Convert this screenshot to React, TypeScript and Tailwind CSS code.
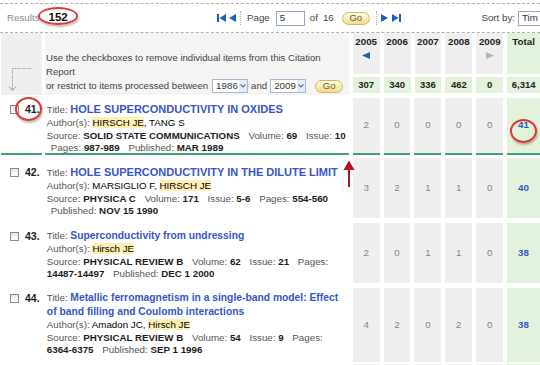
import React from 'react';

const FONT = "font-['Liberation_Sans',Arial,sans-serif]";

const years = ['2005', '2006', '2007', '2008', '2009'];
const yearTotals = ['307', '340', '336', '462', '0'];

function GoButton() {
  return (
    <span className="inline-flex h-[13px] w-[28px] items-center justify-center rounded-full border border-[#cdb76a] bg-gradient-to-b from-[#fffbe0] to-[#f1dc86] text-[9.5px] leading-none text-[#5a5a5a]">
      Go
    </span>
  );
}

function MiniSelect({ value }: { value: string }) {
  return (
    <span className="inline-flex h-[14px] w-[36px] items-center justify-between border border-[#a5b9d1] bg-white pl-[3px] text-[9.75px] leading-none text-[#333]">
      {value}
      <span className="flex h-full w-[8px] items-center justify-center bg-[#e3ecf8]">
        <svg width="6" height="4" viewBox="0 0 6 4">
          <path d="M0.5 0.5 L3 3 L5.5 0.5" fill="none" stroke="#4a74b8" strokeWidth="1.2" />
        </svg>
      </span>
    </span>
  );
}

function Hl({ children }: { children: React.ReactNode }) {
  return <span className="bg-[#fff0b3]">{children}</span>;
}

function Lbl({ children, first }: { children: React.ReactNode; first?: boolean }) {
  return <span className={first ? 'text-[#555]' : 'ml-[6px] text-[#555]'}>{children}</span>;
}

function Val({ children }: { children: React.ReactNode }) {
  return <b className="text-[#1c1c1c]">{children}</b>;
}

type RowProps = {
  n: string;
  mt: string;
  h: string;
  pt: string;
  counts: string[];
  total: string;
  selected?: boolean;
  children: React.ReactNode;
};

function Row({ n, mt, h, pt, counts, total, selected, children }: RowProps) {
  const line = selected ? 'border-b-2 border-[#3ba56b]' : '';
  return (
    <div className={`flex ${mt}`}>
      <div className={`ml-[1px] w-[41px] ${h} ${pt} ${line}`}>
        {n && (
          <div className="flex h-[14px] items-center">
            <span className="ml-[9px] h-[9px] w-[9px] border border-[#8c8c8c] bg-gradient-to-b from-[#e8e8e8] to-white" />
            <span className="ml-[6px] pt-[2px] text-[10.5px] font-bold text-[#1c1c1c]">{n}</span>
          </div>
        )}
      </div>
      <div className={`ml-[3px] w-[305px] whitespace-nowrap pl-[2px] ${h} ${pt} ${line} text-[9.75px] leading-[12.5px]`}>
        {children}
      </div>
      {counts.map((c, i) => (
        <div
          key={i}
          className={`ml-[4px] flex w-[27px] ${h} items-center justify-center bg-[#efefef] text-[9.75px] text-[#858585] ${line}`}
        >
          {c}
        </div>
      ))}
      <div className={`ml-[4px] flex w-[33px] ${h} items-center justify-center bg-[#e3f2dc] text-[9.75px] font-bold text-[#3556c8] ${line}`}>
        {total}
      </div>
    </div>
  );
}

function Title({ children, caps }: { children: React.ReactNode; caps?: boolean }) {
  return (
    <div className="leading-[14px]">
      <span className="text-[#555]">Title: </span>
      <span className={caps ? 'text-[11px] font-bold text-[#3556c8]' : 'text-[10.3px] font-bold text-[#3556c8]'}>
        {children}
      </span>
    </div>
  );
}

export default function App() {
  return (
    <div className={`relative h-[365px] w-[540px] overflow-hidden bg-white ${FONT}`}>
      {/* top bar */}
      <div className="pt-[3px]">
        <div className="flex h-[30px] items-center border-y border-dashed border-[#b0b0b0]">
          <div className="flex w-[217px] items-center pl-[7px]">
            <span className="text-[9.75px] text-[#888]">Results</span>
            <span className="ml-[9px] text-[11.5px] font-bold text-[#111]">152</span>
          </div>
          <div className="flex items-center text-[9.75px] text-[#444]">
            <svg width="20" height="10" viewBox="0 0 20 10">
              <rect x="0" y="1" width="2" height="8" fill="#1d5fb6" />
              <path d="M9 1 L2.5 5 L9 9 Z" fill="#1d5fb6" />
              <path d="M19 1 L12 5 L19 9 Z" fill="#1d5fb6" />
            </svg>
            <span className="ml-[3px] h-[14px] border-l border-dotted border-[#aaa]" />
            <span className="ml-[6px]">Page</span>
            <span className="ml-[6px] flex h-[15px] w-[29px] items-center border border-[#8fa8c8] bg-white pl-[3px] text-[#333]">5</span>
            <span className="ml-[5px]">of</span>
            <span className="ml-[5px]">16</span>
            <span className="ml-[8px] flex"><GoButton /></span>
            <span className="ml-[6px] h-[14px] border-l border-dotted border-[#aaa]" />
            <svg className="ml-[3px]" width="22" height="10" viewBox="0 0 22 10">
              <path d="M1 1 L8 5 L1 9 Z" fill="#1d5fb6" />
              <path d="M12 1 L18.5 5 L12 9 Z" fill="#1d5fb6" />
              <rect x="19" y="1" width="2" height="8" fill="#1d5fb6" />
            </svg>
          </div>
          <div className="ml-auto mr-[-12px] flex items-center text-[9.75px] text-[#444]">
            <span>Sort by:</span>
            <span className="ml-[3px] flex h-[15px] w-[34px] items-center border border-[#8fa8c8] bg-white pl-[3px] text-[#333]">Tim</span>
          </div>
        </div>
      </div>

      {/* header */}
      <div className="flex">
        <div className="ml-[1px] h-[62px] w-[41px] bg-[#efefef]">
          <svg width="41" height="62" viewBox="0 0 41 62">
            <path d="M30 35.5 H11.5 V57" fill="none" stroke="#9a9a9a" strokeWidth="1" strokeDasharray="1.5 1" />
            <path d="M8 53.5 L11.5 57.5 L15 53.5" fill="none" stroke="#9a9a9a" strokeWidth="1" />
          </svg>
        </div>
        <div className="ml-[3px] flex h-[62px] w-[305px] flex-col justify-end whitespace-nowrap bg-[#f4f4f4] pb-[2px] pl-[1px] text-[9.6px] leading-[14px] text-[#444]">
          <div>Use the checkboxes to remove individual items from this Citation</div>
          <div>Report</div>
          <div className="flex h-[14px] items-center">
            <span>or restrict to items processed between</span>
            <span className="ml-[4px] flex"><MiniSelect value="1986" /></span>
            <span className="ml-[3px]">and</span>
            <span className="ml-[3px] flex"><MiniSelect value="2009" /></span>
            <span className="ml-[9px] flex"><GoButton /></span>
          </div>
        </div>
        {years.map((y, i) => (
          <div key={y} className="ml-[4px] flex w-[27px] flex-col">
            <div className="flex h-[41px] flex-col items-center bg-[#efefef] pt-[3px]">
              <span className="text-[9.75px] font-bold leading-[12px] text-[#222]">{y}</span>
              {i === 0 && (
                <svg className="mt-[4px]" width="8" height="7" viewBox="0 0 8 7">
                  <path d="M8 0 L0 3.5 L8 7 Z" fill="#1d5fb6" />
                </svg>
              )}
              {i === 4 && (
                <svg className="mt-[4px]" width="8" height="7" viewBox="0 0 8 7">
                  <path d="M0 0 L8 3.5 L0 7 Z" fill="#b4b4b4" />
                </svg>
              )}
            </div>
            <div className="mt-[3px] flex h-[16px] items-center justify-center bg-[#e3f2dc] text-[9.5px] font-bold text-[#222]">
              {yearTotals[i]}
            </div>
          </div>
        ))}
        <div className="ml-[4px] flex w-[33px] flex-col">
          <div className="flex h-[41px] justify-center bg-[#e3f2dc] pt-[3px]">
            <span className="text-[9.75px] font-bold leading-[12px] text-[#222]">Total</span>
          </div>
          <div className="mt-[3px] flex h-[16px] items-center justify-center bg-[#e3f2dc] text-[9.5px] font-bold text-[#222]">
            6,314
          </div>
        </div>
      </div>

      <Row n="41." mt="mt-[3px]" h="h-[57px]" pt="pt-[4px]" counts={['2', '0', '0', '0', '0']} total="41" selected>
        <Title caps>HOLE SUPERCONDUCTIVITY IN OXIDES</Title>
        <div>
          <Lbl first>Author(s):</Lbl> <Hl>HIRSCH JE</Hl>, TANG S
        </div>
        <div>
          <Lbl first>Source:</Lbl> <Val>SOLID STATE COMMUNICATIONS</Val> <Lbl>Volume:</Lbl> <Val>69</Val>{' '}
          <Lbl>Issue:</Lbl> <Val>10</Val>
        </div>
        <div className="pl-[4px]">
          <Lbl first>Pages:</Lbl> <Val>987-989</Val> <Lbl>Published:</Lbl> <Val>MAR 1989</Val>
        </div>
      </Row>

      <Row n="42." mt="mt-[3px]" h="h-[60px]" pt="pt-[7px]" counts={['3', '2', '1', '1', '0']} total="40">
        <Title caps>HOLE SUPERCONDUCTIVITY IN THE DILUTE LIMIT</Title>
        <div>
          <Lbl first>Author(s):</Lbl> MARSIGLIO F, <Hl>HIRSCH JE</Hl>
        </div>
        <div>
          <Lbl first>Source:</Lbl> <Val>PHYSICA C</Val> <Lbl>Volume:</Lbl> <Val>171</Val> <Lbl>Issue:</Lbl>{' '}
          <Val>5-6</Val> <Lbl>Pages:</Lbl> <Val>554-560</Val>
        </div>
        <div className="pl-[4px]">
          <Lbl first>Published:</Lbl> <Val>NOV 15 1990</Val>
        </div>
      </Row>

      <Row n="43." mt="mt-[5px]" h="h-[60px]" pt="pt-[6px]" counts={['2', '0', '1', '1', '0']} total="38">
        <Title>Superconductivity from undressing</Title>
        <div>
          <Lbl first>Author(s):</Lbl> <Hl>Hirsch JE</Hl>
        </div>
        <div>
          <Lbl first>Source:</Lbl> <Val>PHYSICAL REVIEW B</Val> <Lbl>Volume:</Lbl> <Val>62</Val> <Lbl>Issue:</Lbl>{' '}
          <Val>21</Val> <Lbl>Pages:</Lbl>
        </div>
        <div>
          <Val>14487-14497</Val> <Lbl>Published:</Lbl> <Val>DEC 1 2000</Val>
        </div>
      </Row>

      <Row n="44." mt="mt-[5px]" h="h-[74px]" pt="pt-[3px]" counts={['4', '2', '0', '2', '0']} total="38">
        <div className="leading-[14px]">
          <span className="text-[#555]">Title: </span>
          <span className="text-[10.3px] font-bold text-[#3556c8]">
            Metallic ferromagnetism in a single-band model: Effect
            <br />
            of band filling and Coulomb interactions
          </span>
        </div>
        <div>
          <Lbl first>Author(s):</Lbl> Amadon JC, <Hl>Hirsch JE</Hl>
        </div>
        <div>
          <Lbl first>Source:</Lbl> <Val>PHYSICAL REVIEW B</Val> <Lbl>Volume:</Lbl> <Val>54</Val> <Lbl>Issue:</Lbl>{' '}
          <Val>9</Val> <Lbl>Pages:</Lbl>
        </div>
        <div>
          <Val>6364-6375</Val> <Lbl>Published:</Lbl> <Val>SEP 1 1996</Val>
        </div>
      </Row>

      <Row n="" mt="mt-[2px]" h="h-[20px]" pt="pt-[4px]" counts={['', '', '', '', '']} total="">
        <span />
      </Row>

      {/* annotations */}
      <div className="absolute left-[38px] top-[7px] h-[18px] w-[40px] rounded-[50%] border-2 border-[#dc3a30] shadow-[1px_2px_2px_rgba(0,0,0,0.25)]" />
      <div className="absolute left-[15px] top-[97px] h-[24px] w-[27px] rounded-[50%] border-2 border-[#dc3a30] shadow-[1px_2px_2px_rgba(0,0,0,0.25)]" />
      <div className="absolute left-[510px] top-[119px] h-[24px] w-[27px] rounded-[50%] border-2 border-[#dc3a30] shadow-[1px_2px_2px_rgba(0,0,0,0.25)]" />
      <svg className="absolute left-[343px] top-[160px]" width="12" height="28" viewBox="0 0 12 28">
        <path d="M6 6 V27" stroke="#b3121f" strokeWidth="2" />
        <path d="M0.5 10 L6 0.5 L11.5 10 Z" fill="#b3121f" />
      </svg>
    </div>
  );
}
